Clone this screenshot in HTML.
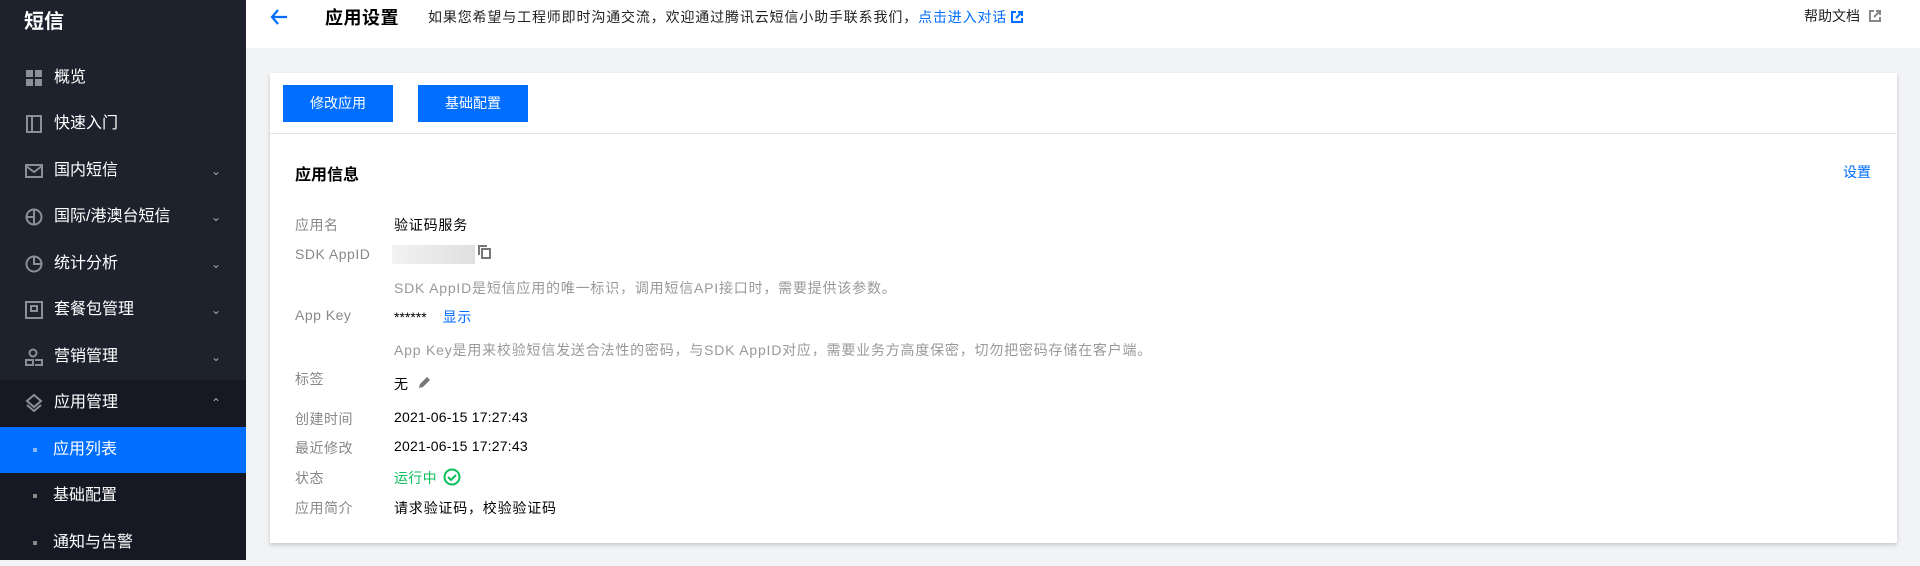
<!DOCTYPE html>
<html><head><meta charset="utf-8"><style>
*{margin:0;padding:0;box-sizing:border-box}
body{width:1920px;height:560px;overflow:hidden;background:#f2f3f5;font-family:"Liberation Sans","Noto Sans CJK SC",sans-serif;font-size:14px;color:#000;position:relative}
.a{position:absolute;white-space:nowrap}
#side{position:absolute;left:0;top:0;width:246px;height:560px;background:#1e222d}
.it{position:absolute;left:0;width:246px;height:46px;line-height:46px;color:#fff;font-size:16px}
.it .t{position:absolute;left:54px;top:0}
.it svg.i{position:absolute;left:25px;top:14px}
.it .ch{position:absolute;left:211px;top:0;color:#aaa;font-size:12px}
.sub{position:absolute;left:0;width:246px;height:46px;line-height:46px;color:#fff;font-size:16px}
.sub .t{position:absolute;left:53px}
.sub .d{position:absolute;left:33px;top:21px;width:4px;height:4px;background:#888}
.lab{position:absolute;left:295px;color:#888;font-size:14px;white-space:nowrap;letter-spacing:.5px}
.val{position:absolute;left:394px;color:#000;font-size:14px;white-space:nowrap;letter-spacing:.8px}
.btn{position:absolute;top:85px;width:110px;height:37px;background:#006eff;color:#fff;line-height:37px;text-align:center;font-size:14px}
</style></head><body>
<div id="side">
<div class="a" style="left:24px;top:5px;color:#fff;font-size:20px;font-weight:bold">短信</div>
<div class="it" style="top:55px"><svg class="i" width="18" height="18" viewBox="0 0 18 18" fill="#8a8f99"><rect x="1" y="1" width="7" height="7"/><rect x="10" y="1" width="7" height="7"/><rect x="1" y="10" width="7" height="7"/><rect x="10" y="10" width="7" height="7"/></svg><span class="t">概览</span></div>
<div class="it" style="top:101px"><svg class="i" width="18" height="18" viewBox="0 0 18 18" fill="none" stroke="#8a8f99" stroke-width="2"><rect x="2" y="1" width="14" height="16"/><line x1="7" y1="1" x2="7" y2="17"/></svg><span class="t">快速入门</span></div>
<div class="it" style="top:148px"><svg class="i" width="18" height="18" viewBox="0 0 18 18" fill="none" stroke="#8a8f99" stroke-width="2"><rect x="1" y="3" width="16" height="12"/><path d="M1 4l8 6 8-6"/></svg><span class="t">国内短信</span><span class="ch">⌄</span></div>
<div class="it" style="top:194px"><svg class="i" width="18" height="18" viewBox="0 0 18 18" fill="none" stroke="#8a8f99" stroke-width="2"><circle cx="9" cy="9" r="7.5"/><path d="M9 1v16M1 9h8"/></svg><span class="t">国际/港澳台短信</span><span class="ch">⌄</span></div>
<div class="it" style="top:241px"><svg class="i" width="18" height="18" viewBox="0 0 18 18" fill="none" stroke="#8a8f99" stroke-width="2"><circle cx="9" cy="9" r="7.5"/><path d="M9 2v7h7"/></svg><span class="t">统计分析</span><span class="ch">⌄</span></div>
<div class="it" style="top:287px"><svg class="i" width="18" height="18" viewBox="0 0 18 18" fill="none" stroke="#8a8f99" stroke-width="2"><rect x="1" y="1" width="16" height="16"/><path d="M6 5h6v5H6z"/></svg><span class="t">套餐包管理</span><span class="ch">⌄</span></div>
<div class="it" style="top:334px"><svg class="i" width="18" height="18" viewBox="0 0 18 18" fill="none" stroke="#8a8f99" stroke-width="2"><circle cx="8" cy="5" r="3.5"/><path d="M1 17v-5h7v5zM10 12h7v5h-7"/></svg><span class="t">营销管理</span><span class="ch">⌄</span></div>
<div style="position:absolute;left:0;top:380px;width:246px;height:180px;background:#161923"></div>
<div class="it" style="top:380px"><svg class="i" width="18" height="18" viewBox="0 0 18 18" fill="none" stroke="#8a8f99" stroke-width="2"><path d="M9 1l7 6-7 6-7-6z"/><path d="M2 11l7 6 7-6"/></svg><span class="t">应用管理</span><span class="ch">⌃</span></div>
<div class="sub" style="top:427px;background:#006eff"><span class="d" style="background:#8ab8ff"></span><span class="t">应用列表</span></div>
<div class="sub" style="top:473px"><span class="d"></span><span class="t">基础配置</span></div>
<div class="sub" style="top:520px"><span class="d"></span><span class="t">通知与告警</span></div>
</div>
<div style="position:absolute;left:246px;top:0;width:1674px;height:48px;background:#fff"></div>
<svg class="a" style="left:270px;top:8px" width="18" height="18" viewBox="0 0 18 18" fill="none" stroke="#006eff" stroke-width="2.2"><path d="M17 9H2M8 2L2 9l6 7"/></svg>
<div class="a" style="left:325px;top:4px;font-size:18px;font-weight:bold;letter-spacing:.5px">应用设置</div>
<div class="a" style="left:428px;top:7px;font-size:14px;color:#222;letter-spacing:.85px">如果您希望与工程师即时沟通交流，欢迎通过腾讯云短信小助手联系我们，<span style="color:#006eff">点击进入对话</span><svg style="margin-left:4px;vertical-align:-1px" width="12" height="12" viewBox="0 0 12 12" fill="none" stroke="#006eff" stroke-width="2"><path d="M5 1H1v10h10V7M7 1h4v4M11 1L5 7"/></svg></div>
<div class="a" style="left:1804px;top:6px;font-size:14px;color:#222">帮助文档</div>
<svg class="a" style="left:1869px;top:10px" width="12" height="12" viewBox="0 0 12 12" fill="none" stroke="#888" stroke-width="2"><path d="M5 1H1v10h10V7M7 1h4v4M11 1L5 7"/></svg>
<div style="position:absolute;left:270px;top:73px;width:1627px;height:470px;background:#fff;box-shadow:0 2px 4px rgba(0,0,0,.18)"></div>
<div style="position:absolute;left:270px;top:133px;width:1627px;height:1px;background:#e5e5e5"></div>
<div class="btn" style="left:283px">修改应用</div>
<div class="btn" style="left:418px">基础配置</div>
<div class="a" style="left:295px;top:161px;font-size:16px;font-weight:bold">应用信息</div>
<div class="a" style="left:1843px;top:162px;color:#006eff">设置</div>
<div class="lab" style="top:215px">应用名</div><div class="val" style="top:215px">验证码服务</div>
<div class="lab" style="top:246px">SDK AppID</div>
<div style="position:absolute;left:392px;top:245px;width:83px;height:19px;background:linear-gradient(90deg,#f2f2f2,#e0e0e0)"></div>
<svg class="a" style="left:478px;top:245px" width="13" height="14" viewBox="0 0 13 14" fill="none" stroke="#777" stroke-width="2"><path d="M1 10V1h8"/><rect x="4" y="4" width="8" height="9"/></svg>
<div class="val" style="top:278px;color:#999">SDK AppID是短信应用的唯一标识，调用短信API接口时，需要提供该参数。</div>
<div class="lab" style="top:307px">App Key</div><div class="val" style="top:307px;letter-spacing:0">****** <span style="color:#006eff;margin-left:12px;letter-spacing:.8px">显示</span></div>
<div class="val" style="top:340px;color:#999">App Key是用来校验短信发送合法性的密码，与SDK AppID对应，需要业务方高度保密，切勿把密码存储在客户端。</div>
<div class="lab" style="top:369px">标签</div><div class="val" style="top:374px">无</div>
<svg class="a" style="left:418px;top:376px" width="13" height="13" viewBox="0 0 13 13" fill="#777"><path d="M1 12l1-4 7-7 3 3-7 7z"/></svg>
<div class="lab" style="top:409px">创建时间</div><div class="val" style="top:409px;letter-spacing:.2px">2021-06-15 17:27:43</div>
<div class="lab" style="top:438px">最近修改</div><div class="val" style="top:438px;letter-spacing:.2px">2021-06-15 17:27:43</div>
<div class="lab" style="top:468px">状态</div><div class="val" style="top:468px;color:#0abf5b;letter-spacing:.3px">运行中</div>
<svg class="a" style="left:443px;top:468px" width="18" height="18" viewBox="0 0 18 18" fill="none" stroke="#0abf5b" stroke-width="2"><circle cx="9" cy="9" r="7.5"/><path d="M5 9l3 3 5-5"/></svg>
<div class="lab" style="top:498px">应用简介</div><div class="val" style="top:498px">请求验证码，校验验证码</div>
</body></html>
